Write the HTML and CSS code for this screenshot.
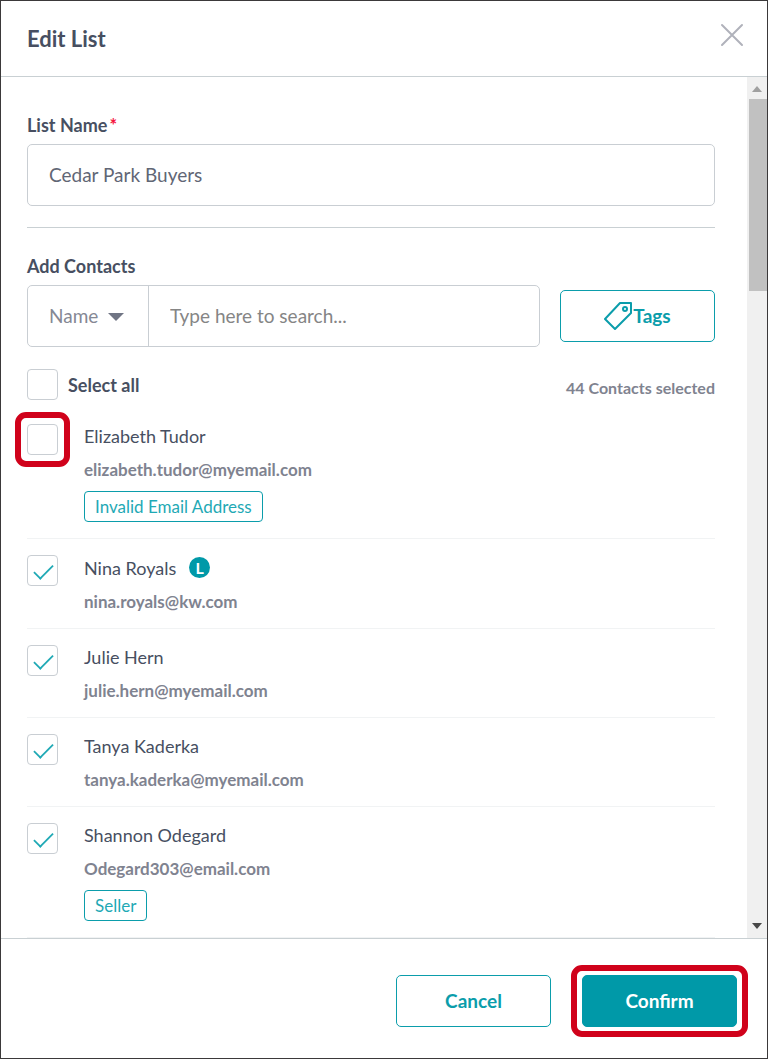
FILE: index.html
```
<!DOCTYPE html>
<html lang="en">
<head>
  <meta charset="UTF-8">
  <title>Edit List</title>
  <meta name="viewport" content="width=device-width, initial-scale=1">
  <link rel="stylesheet" href="styles.css">
</head>
<body>
  <form class="modal" onsubmit="return false">
    <!-- Header -->
    <header class="modal-header">
      <h1>Edit List</h1>
      <button type="button" class="close" aria-label="Close">
        <svg width="24" height="24" viewBox="0 0 24 24" fill="none" stroke="#b0b2bb" stroke-width="2" stroke-linecap="round">
          <path d="M2 2L22 22M22 2L2 22"/>
        </svg>
      </button>
    </header>

    <!-- Scrolling content -->
    <div class="modal-body">
      <div class="content">
        <label class="field-label" for="list-name">List Name<span class="required">*</span></label>
        <input class="text-input" type="text" id="list-name" value="Cedar Park Buyers">

        <hr>

        <label class="field-label" for="search">Add Contacts</label>
        <div class="search-row">
          <div class="search-group">
            <div class="select-wrap">
              <select aria-label="Search by">
                <option>Name</option>
                <option>Email</option>
              </select>
              <svg class="caret" width="16" height="8" viewBox="0 0 16 8"><path d="M0 0H16L8 8Z" fill="#707584"/></svg>
            </div>
            <input type="text" id="search" placeholder="Type here to search...">
          </div>
          <button type="button" class="btn">
            <svg width="29" height="29" viewBox="0 0 29 29" fill="none" stroke="#0b9dab" stroke-width="2" stroke-linejoin="round">
              <path d="M16 1H27V11L11 27L1 17Z"/>
              <circle cx="21" cy="7" r="2"/>
            </svg>Tags
          </button>
        </div>

        <div class="select-all">
          <input type="checkbox" id="all">
          <label for="all">Select all</label>
          <span class="count">44 Contacts selected</span>
        </div>

        <ul class="contacts">
          <li class="contact">
            <span class="check highlight"><input type="checkbox" id="c1"></span>
            <div class="info">
              <label class="name" for="c1">Elizabeth Tudor</label>
              <div class="email">elizabeth.tudor@myemail.com</div>
              <span class="tag">Invalid Email Address</span>
            </div>
          </li>
          <li class="contact">
            <span class="check"><input type="checkbox" id="c2" checked></span>
            <div class="info">
              <label class="name has-badge" for="c2">Nina Royals <span class="badge">L</span></label>
              <div class="email">nina.royals@kw.com</div>
            </div>
          </li>
          <li class="contact">
            <span class="check"><input type="checkbox" id="c3" checked></span>
            <div class="info">
              <label class="name" for="c3">Julie Hern</label>
              <div class="email">julie.hern@myemail.com</div>
            </div>
          </li>
          <li class="contact">
            <span class="check"><input type="checkbox" id="c4" checked></span>
            <div class="info">
              <label class="name" for="c4">Tanya Kaderka</label>
              <div class="email">tanya.kaderka@myemail.com</div>
            </div>
          </li>
          <li class="contact">
            <span class="check"><input type="checkbox" id="c5" checked></span>
            <div class="info">
              <label class="name" for="c5">Shannon Odegard</label>
              <div class="email">Odegard303@email.com</div>
              <span class="tag">Seller</span>
            </div>
          </li>
        </ul>
      </div>

      <div class="scrollbar" aria-hidden="true">
        <svg width="10" height="6" viewBox="0 0 10 6"><path d="M0 6L5 0L10 6Z" fill="#a0a0a0"/></svg>
        <div class="track"><div class="thumb"></div></div>
        <svg width="10" height="6" viewBox="0 0 10 6"><path d="M0 0H10L5 6Z" fill="#484848"/></svg>
      </div>
    </div>

    <!-- Footer -->
    <footer class="modal-footer">
      <button type="button" class="btn">Cancel</button>
      <span class="highlight wide"><button type="submit" class="btn primary">Confirm</button></span>
    </footer>
  </form>
</body>
</html>
```

FILE: styles.css
```
* {
  box-sizing: border-box;
}
body {
  margin: 0;
  font-family: Lato, "Liberation Sans", sans-serif;
  font-size: 18px;
  line-height: 24px;
  color: #474f61;
  background-color: #fff;
}
button, input, select {
  font: inherit;
  color: inherit;
  margin: 0;
}

/* Modal */
.modal {
  display: flex;
  flex-direction: column;
  height: 100vh;
  border: 1px solid #3b393a;
}
.modal-header {
  display: flex;
  justify-content: space-between;
  align-items: center;
  height: 76px;
  padding: 0 23px 0 26px;
  border-bottom: 1px solid #c9d0d3;
}
h1 {
  margin: 0;
  font-size: 22px;
  font-weight: bold;
}
.close {
  display: flex;
  padding: 0;
  margin-bottom: 8px;
  border: 0;
  background: none;
  cursor: pointer;
}
.modal-body {
  display: flex;
  flex: 1;
  min-height: 0;
}
.content {
  flex: 1;
  padding: 36px 32px 0 26px;
  overflow-y: auto;
  scrollbar-width: none;
}

/* Fields */
.field-label {
  display: block;
  margin-bottom: 7px;
  font-weight: bold;
}
.required {
  margin-left: 2px;
  color: #f5143c;
}
.text-input, .search-group {
  height: 62px;
  border: 1px solid #c9ced3;
  border-radius: 5px;
  background-color: #fff;
}
.text-input {
  display: block;
  width: 100%;
  padding: 0 21px 2px;
  font-size: 19px;
  color: #616675;
}
hr {
  margin: 21px 0 26px;
  border: 0;
  border-top: 1px solid #c9d0d3;
}
.search-row {
  display: flex;
  align-items: center;
  gap: 20px;
}
.search-group {
  display: flex;
  flex: 1;
  font-size: 19px;
}
.search-group input {
  flex: 1;
  min-width: 0;
  padding: 0 21px;
  border: 0;
  background: none;
}
.search-group input::placeholder {
  color: #858585;
}
.select-wrap {
  position: relative;
  width: 121px;
  border-right: 1px solid #c9ced3;
}
.select-wrap select {
  width: 100%;
  height: 100%;
  padding: 0 21px;
  border: 0;
  background: none;
  color: #858894;
  appearance: none;
}
.caret {
  position: absolute;
  top: 27px;
  right: 24px;
  pointer-events: none;
}

/* Buttons */
.btn {
  display: flex;
  justify-content: center;
  align-items: center;
  width: 155px;
  height: 52px;
  padding: 0;
  border: 1px solid #0b9dab;
  border-radius: 5px;
  background-color: #fff;
  color: #0b9dab;
  font-size: 19px;
  font-weight: bold;
  cursor: pointer;
}
.btn.primary {
  background-color: #0099a8;
  border-color: #0099a8;
  color: #fff;
}

/* Checkboxes */
input[type="checkbox"] {
  display: block;
  position: relative;
  width: 31px;
  height: 31px;
  border: 1px solid #c9ced3;
  border-radius: 4px;
  background-color: #fff;
  appearance: none;
}
input[type="checkbox"]:checked::before {
  content: "";
  position: absolute;
  top: 8px;
  left: 5px;
  width: 19px;
  height: 9px;
  border-left: 2px solid #1fa9b5;
  border-bottom: 2px solid #1fa9b5;
  transform: rotate(-45deg) scale(0.9);
}
.select-all {
  display: flex;
  align-items: center;
  margin-top: 22px;
  font-weight: bold;
}
.select-all label {
  margin-left: 10px;
}
.count {
  margin-left: auto;
  padding-top: 6px;
  font-size: 16px;
  color: #7f8390;
}

/* Contact list */
.contacts {
  list-style: none;
  margin: 8px 0 0;
  padding: 0;
}
.contact {
  display: flex;
  gap: 26px;
  padding: 16px 0 14px;
  border-bottom: 1px solid #f1f3f4;
}
.name {
  display: flex;
  align-items: center;
  height: 24px;
}
.name.has-badge {
  height: 25px;
}
.badge {
  width: 21px;
  height: 21px;
  margin-left: 13px;
  border-radius: 50%;
  background-color: #0099a8;
  color: #fff;
  font-size: 16px;
  font-weight: bold;
  line-height: 21px;
  text-align: center;
}
.email {
  margin-top: 10px;
  font-size: 17px;
  font-weight: bold;
  color: #7f8390;
}
.tag {
  display: block;
  width: fit-content;
  margin: 9px 0 2px;
  padding: 0 10px;
  border: 1px solid #0b9dab;
  border-radius: 4px;
  color: #1fa9b5;
  font-size: 17px;
  line-height: 29px;
}

/* Scrollbar */
.scrollbar {
  display: flex;
  flex-direction: column;
  align-items: center;
  gap: 7px;
  width: 20px;
  padding: 9px 0;
  background-color: #f0f0f0;
}
.track {
  flex: 1;
  width: 100%;
  padding-left: 2px;
}
.thumb {
  height: 192px;
  background-color: #c1c1c1;
}

/* Footer */
.modal-footer {
  display: flex;
  justify-content: flex-end;
  gap: 31px;
  padding: 36px 30px 31px;
  border-top: 1px solid #c9d0d3;
}

/* Red callouts */
.highlight {
  position: relative;
  height: fit-content;
}
.highlight::after {
  content: "";
  position: absolute;
  inset: -12px;
  border: 6px solid #d0021b;
  border-radius: 11px;
  pointer-events: none;
}
.highlight.wide::after {
  inset: -10px -11px;
}
```
